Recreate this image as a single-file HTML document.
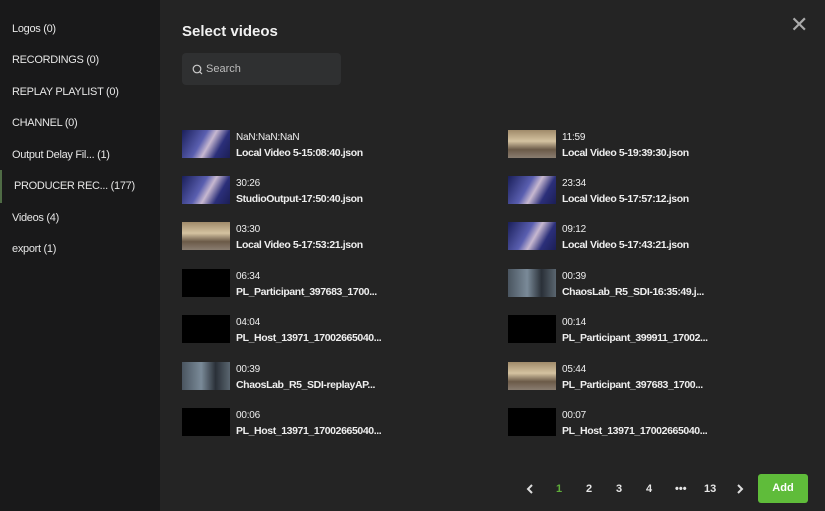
<!DOCTYPE html>
<html><head><style>
*{margin:0;padding:0;box-sizing:border-box}
body{width:825px;height:511px;background:#242424;font-family:"Liberation Sans",Arial,sans-serif;position:relative;overflow:hidden;color:#fff}
.side{position:absolute;left:0;top:0;width:160px;height:511px;background:#19191a}
.side div{position:absolute;left:12px;font-size:11px;color:#e6e6e6;letter-spacing:-0.3px}
.bar{position:absolute;left:0;top:170px;width:2px;height:33px;background:#4f6b45}
h1{position:absolute;left:182px;top:23px;font-size:15px;font-weight:bold;color:#f0f0f0}
.search{position:absolute;left:182px;top:53px;width:159px;height:32px;background:#2f3031;border-radius:4px}
.search span{position:absolute;left:24px;top:10px;font-size:11px;color:#bbb}
.close{position:absolute;left:790px;top:14px;font-size:22px;color:#aaa;line-height:22px}
.item{position:absolute;height:28px}
.th{position:absolute;left:0;top:0;width:48px;height:28px;background:#000}
.t1{position:absolute;left:54px;top:2px;font-size:10px;color:#eee;white-space:nowrap;letter-spacing:-0.2px}
.t2{position:absolute;left:54px;top:17px;font-size:10.5px;font-weight:bold;color:#eee;white-space:nowrap;letter-spacing:-0.4px}
.blue{background:linear-gradient(120deg,#1a1f5a,#5a5fb0 40%,#c7b8d0 55%,#2b2f7a 75%,#1b1e55)}
.tan{background:linear-gradient(180deg,#a08a6a,#d4c2a0 40%,#6b5a48 70%,#8a7d70)}
.gray{background:linear-gradient(90deg,#4a5560,#7a8a98 40%,#2a3038 70%,#5a6670)}
.pg{position:absolute;top:483px;font-size:11px;font-weight:bold;color:#e6e6e6}
.add{position:absolute;left:758px;top:474px;width:50px;height:29px;background:#5fbc3a;border-radius:3px;font-size:11px;font-weight:bold;text-align:center;line-height:29px}
</style></head><body>
<div class="side">
<div style="top:23px">Logos (0)</div>
<div style="top:54px">RECORDINGS (0)</div>
<div style="top:86px">REPLAY PLAYLIST (0)</div>
<div style="top:117px">CHANNEL (0)</div>
<div style="top:149px">Output Delay Fil... (1)</div>
<div style="top:180px;left:14px">PRODUCER REC... (177)</div>
<div style="top:212px">Videos (4)</div>
<div style="top:243px">export (1)</div>
</div>
<div class="bar"></div>
<h1>Select videos</h1>
<div class="search"><svg style="position:absolute;left:10px;top:11px" width="11" height="11" viewBox="0 0 11 11"><circle cx="5" cy="5" r="3.8" fill="none" stroke="#ccc" stroke-width="1.2"/><line x1="7.8" y1="7.8" x2="10" y2="10" stroke="#ccc" stroke-width="1.2"/></svg><span>Search</span></div>
<div class="close">✕</div>

<div class="item" style="left:182px;top:130px"><div class="th blue"></div><div class="t1">NaN:NaN:NaN</div><div class="t2">Local Video 5-15:08:40.json</div></div>
<div class="item" style="left:508px;top:130px"><div class="th tan"></div><div class="t1">11:59</div><div class="t2">Local Video 5-19:39:30.json</div></div>
<div class="item" style="left:182px;top:176px"><div class="th blue"></div><div class="t1">30:26</div><div class="t2">StudioOutput-17:50:40.json</div></div>
<div class="item" style="left:508px;top:176px"><div class="th blue"></div><div class="t1">23:34</div><div class="t2">Local Video 5-17:57:12.json</div></div>
<div class="item" style="left:182px;top:222px"><div class="th tan"></div><div class="t1">03:30</div><div class="t2">Local Video 5-17:53:21.json</div></div>
<div class="item" style="left:508px;top:222px"><div class="th blue"></div><div class="t1">09:12</div><div class="t2">Local Video 5-17:43:21.json</div></div>
<div class="item" style="left:182px;top:269px"><div class="th"></div><div class="t1">06:34</div><div class="t2">PL_Participant_397683_1700...</div></div>
<div class="item" style="left:508px;top:269px"><div class="th gray"></div><div class="t1">00:39</div><div class="t2">ChaosLab_R5_SDI-16:35:49.j...</div></div>
<div class="item" style="left:182px;top:315px"><div class="th"></div><div class="t1">04:04</div><div class="t2">PL_Host_13971_17002665040...</div></div>
<div class="item" style="left:508px;top:315px"><div class="th"></div><div class="t1">00:14</div><div class="t2">PL_Participant_399911_17002...</div></div>
<div class="item" style="left:182px;top:362px"><div class="th gray"></div><div class="t1">00:39</div><div class="t2">ChaosLab_R5_SDI-replayAP...</div></div>
<div class="item" style="left:508px;top:362px"><div class="th tan"></div><div class="t1">05:44</div><div class="t2">PL_Participant_397683_1700...</div></div>
<div class="item" style="left:182px;top:408px"><div class="th"></div><div class="t1">00:06</div><div class="t2">PL_Host_13971_17002665040...</div></div>
<div class="item" style="left:508px;top:408px"><div class="th"></div><div class="t1">00:07</div><div class="t2">PL_Host_13971_17002665040...</div></div>

<svg style="position:absolute;left:526px;top:484px" width="8" height="10" viewBox="0 0 8 10"><path d="M6 1L2 5l4 4" fill="none" stroke="#ddd" stroke-width="2"/></svg>
<div class="pg" style="left:556px;color:#5fae3a">1</div>
<div class="pg" style="left:586px">2</div>
<div class="pg" style="left:616px">3</div>
<div class="pg" style="left:646px">4</div>
<div class="pg" style="left:675px">•••</div>
<div class="pg" style="left:704px">13</div>
<svg style="position:absolute;left:736px;top:484px" width="8" height="10" viewBox="0 0 8 10"><path d="M2 1l4 4-4 4" fill="none" stroke="#ddd" stroke-width="2"/></svg>
<div class="add">Add</div>
</body></html>
